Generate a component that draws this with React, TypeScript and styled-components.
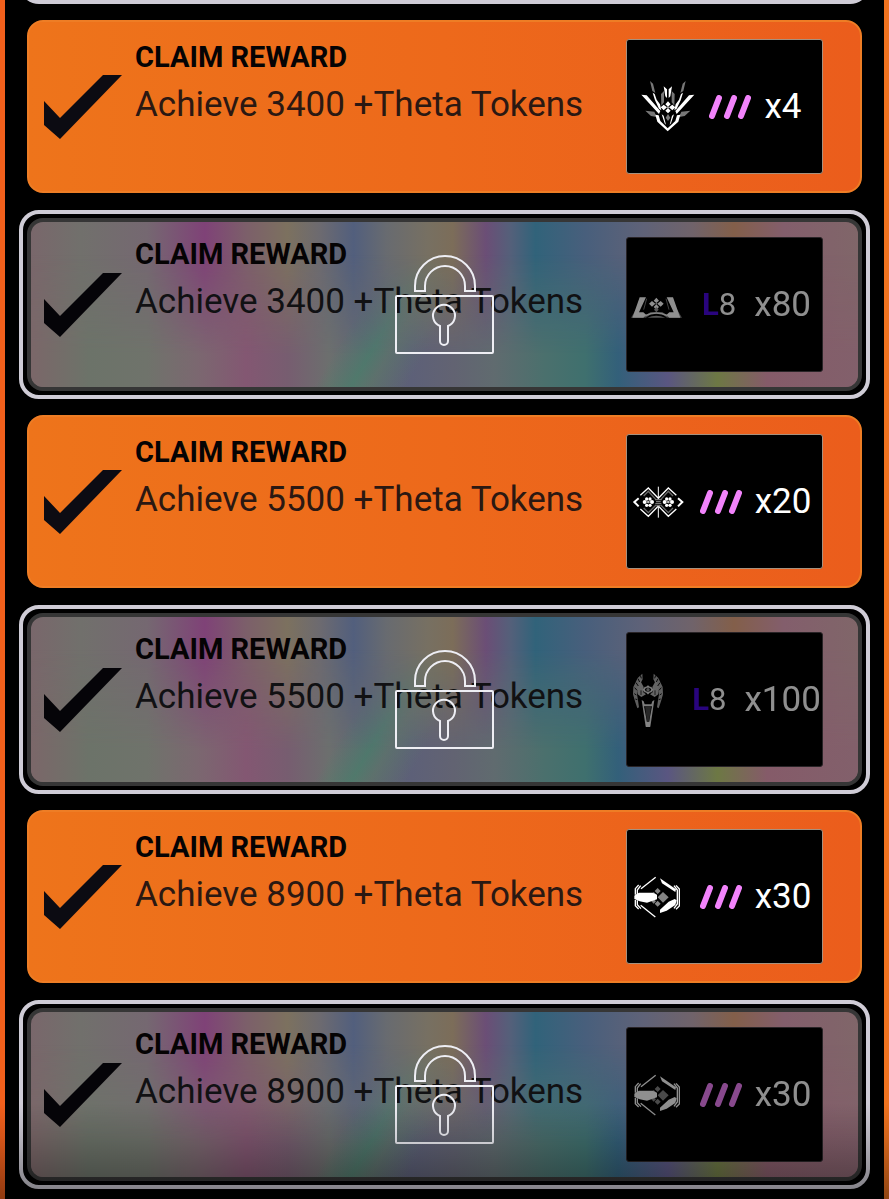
import React from "react";
import styled, { createGlobalStyle, css } from "styled-components";

const GlobalStyle = createGlobalStyle`
  * { box-sizing: border-box; }
  body {
    margin: 0;
    background: #000;
    font-family: Roboto, "Open Sans", sans-serif;
  }
`;

const Page = styled.main`
  position: relative;
  min-height: 100vh;
  overflow: hidden;
  padding: 0 5px;
  background: linear-gradient(90deg, #f2601c, #f0731f);
`;

const Panel = styled.div`
  min-height: 100vh;
  padding: 0 14px 10px;
  background: #000;
`;

const BottomShade = styled.div`
  position: absolute;
  inset: auto 0 0 0;
  height: 96px;
  background: linear-gradient(180deg, transparent, rgba(0, 0, 0, 0.12) 35%, rgba(0, 0, 0, 0.4));
  pointer-events: none;
`;

const RewardList = styled.ul`
  display: flex;
  flex-direction: column;
  gap: 16px;
  margin: 0;
  padding: 0;
  list-style: none;
`;

const frame = css`
  border: 4px solid #cfccd6;
  border-radius: 20px;
`;

const ScrolledItem = styled.li`
  display: flex;
  flex-direction: column;
  justify-content: flex-end;
  height: 4px;
  overflow: hidden;
`;

const ScrolledFrame = styled.div`
  ${frame}
  flex: none;
  height: 60px;
`;

const RewardItem = styled.li<{ $locked: boolean }>`
  ${(p) =>
    p.$locked
      ? css`
          ${frame}
          padding: 4px;
        `
      : css`
          padding: 0 8px 1px;
        `}
`;

const openCard = css`
  background: linear-gradient(90deg, #ee741b, #ed691b 50%, #eb5d1c);
  border: 2px solid #ee7d25;
  cursor: pointer;
`;

const lockedCard = css`
  border: 4px solid #363636;
  background: linear-gradient(
    90deg,
    #79676b 0%,
    #71706c 6%,
    #756871 14%,
    #7f4277 21%,
    #7c5f6a 26%,
    #7c715f 31%,
    #6c6a70 35%,
    #525f7d 39%,
    #686b70 43%,
    #777062 48%,
    #7c6d59 51%,
    #6b4e76 55%,
    #54607a 58%,
    #31637a 61%,
    #485f7c 67%,
    #5f6278 74%,
    #70636a 80%,
    #835f4a 85%,
    #835e6c 91%,
    #806669 100%
  );

  &::before {
    content: "";
    position: absolute;
    inset: 0;
    border-radius: 12px;
    background:
      linear-gradient(
        120deg,
        transparent 41%,
        rgba(70, 130, 105, 0.65) 45%,
        rgba(90, 128, 100, 0.45) 47%,
        transparent 51%
      ),
      linear-gradient(
        90deg,
        #7b6769 0%,
        #6c7369 7%,
        #6f736b 14%,
        #7b6870 20%,
        #835772 26%,
        #775d70 31%,
        #6c6f6e 36%,
        #606473 41%,
        #5d6078 46%,
        #626372 51%,
        #606b6f 56%,
        #4b706d 62%,
        #3f706e 67%,
        #33607a 71%,
        #5a5681 77%,
        #6d7844 83%,
        #855b69 89%,
        #82606b 100%
      );
    mask-image: linear-gradient(180deg, transparent 20%, #000 80%);
  }
`;

const RewardCard = styled.button<{ $locked: boolean }>`
  position: relative;
  display: flex;
  align-items: center;
  width: 100%;
  height: 173px;
  margin: 0;
  padding: 0;
  border-radius: 16px;
  color: #08070b;
  font: inherit;
  text-align: left;
  ${(p) => (p.$locked ? lockedCard : openCard)}
  padding-left: ${(p) => (p.$locked ? 13 : 15)}px;
  padding-right: ${(p) => (p.$locked ? 35 : 37)}px;
`;

const CheckMark = styled.svg`
  position: relative;
  flex: none;
  width: 78px;
  height: 64px;
`;

const Copy = styled.span<{ $locked: boolean }>`
  position: relative;
  display: flex;
  flex: 1;
  flex-direction: column;
  align-self: flex-start;
  min-width: 0;
  padding: ${(p) => (p.$locked ? 9 : 12)}px 0 0 13px;
`;

const Title = styled.span`
  font-size: 29px;
  font-weight: 700;
  line-height: 46px;
  color: #050304;
`;

const Goal = styled.span<{ $locked: boolean }>`
  font-size: 35px;
  line-height: 50px;
  white-space: nowrap;
  color: ${(p) => (p.$locked ? "#111113" : "#2b1812")};
`;

const RewardTile = styled.span<{ $locked: boolean }>`
  position: relative;
  display: flex;
  flex: none;
  align-items: center;
  justify-content: center;
  width: 197px;
  height: 135px;
  padding-right: 4px;
  border: 1px solid ${(p) => (p.$locked ? "#292427" : "#a7917e")};
  border-radius: 3px;
  background: #000;
  color: #fff;

  > * {
    flex: none;
    opacity: ${(p) => (p.$locked ? 0.56 : 1)};
  }
`;

const Emblem = styled.svg`
  width: 50px;
  height: 50px;
  overflow: visible;
`;

const Slashes = styled.svg`
  width: 42px;
  height: 24px;
  margin: 0 13px 0 16px;
`;

const Level = styled.span`
  margin: 0 18px 0 18px;
  font-size: 31px;
  line-height: 40px;

  b {
    color: #4a08e0;
  }
`;

const Amount = styled.span`
  font-size: 35px;
  line-height: 42px;
`;

const Padlock = styled.svg`
  position: absolute;
  top: 50%;
  left: 50%;
  width: 100px;
  height: 100px;
  transform: translate(-50%, -50%);
`;

type EmblemKind = "thorn" | "ramp" | "twin" | "wings" | "orbit";

/* Four-lobed core with a small pivot, shared by several emblems */
const Core = ({ x, y }: { x: number; y: number }) => (
  <g transform={`translate(${x} ${y})`} fill="#fff">
    <path d="M0-18 8-9 0-2-8-9ZM0 2 8 10 0 18-8 10Z" />
    <path d="M-13-8-3 0-13 9-22 0ZM13-8 22 0 13 9 3 0Z" />
    <circle r="3" fill="#aaa" />
  </g>
);

const emblems: Record<EmblemKind, { box: string; art: React.ReactNode }> = {
  thorn: {
    box: "129 245 150 150",
    art: (
      <>
        <g fill="#777">
          <path d="M150 242 159 250 166 278 157 272ZM257 242 248 250 241 278 250 272Z" />
          <path d="M136 331 163 334 170 350 153 347ZM271 331 244 334 237 350 254 347Z" />
          <path d="M183 281 192 272 192 306 184 316ZM224 281 215 272 215 306 223 316Z" />
        </g>
        <g fill="#fff">
          <path d="M124 283 140 285 181 332 177 341ZM283 283 267 285 226 332 230 341Z" />
          <path d="M158 277 164 281 170 298 180 312 184 330 177 325 165 300ZM249 277 243 281 237 298 227 312 223 330 230 325 242 300Z" />
          <path d="M191 258 201 267 201 293 196 288ZM216 258 206 267 206 293 211 288Z" />
          <path d="M166 343 176 345 181 362 203 384 226 362 231 345 241 343 235 364 203 393 172 364Z" />
          <path d="M185 342 191 346 198 373 194 369ZM222 342 216 346 209 373 213 369Z" />
        </g>
        <Core x={204} y={321} />
        <path d="M204 341 211 352 204 362 197 352Z" fill="#777" />
      </>
    ),
  },
  ramp: {
    box: "578 237 150 150",
    art: (
      <>
        <path d="M588 318 569 350H614L630 338H661L677 350H722L703 318 711 345H680L663 333H628L609 345H577Z" fill="#777" />
        <path d="M595 289H614L593 334H606L615 342 606 350H573L577 340Z" fill="#fff" />
        <path d="M695 289H676L697 334H684L675 342 684 350H717L713 340Z" fill="#fff" />
        <path d="M616 293 607 326M674 293 683 326" stroke="#777" strokeWidth="3" />
        <path d="M611 344Q645 328 679 344" stroke="#eee" strokeWidth="5" fill="none" />
        <path d="M618 350Q645 339 672 350Z" fill="#999" />
        <Core x={645} y={308} />
        <path d="M645 318 652 326 645 334 638 326Z" fill="#999" />
      </>
    ),
  },
  twin: {
    box: "24 140 150 150",
    art: (
      <>
        <g fill="none" strokeWidth="4">
          <path d="M53 197 67 183 90 208M104 208 127 183 141 197M53 233 67 247 90 224M104 224 127 247 141 233" stroke="#666" />
          <path d="M43 195 67 173 97 204 127 173 151 195M43 236 67 258 97 227 127 258 151 236" stroke="#fff" />
          <path d="M38 204 25 215 38 228M156 204 169 215 156 228" stroke="#fff" strokeWidth="6" />
          <path d="M97 169V202M97 228V262" stroke="#fff" strokeWidth="3" />
          <path d="M87 208H107M90 214H104M88 220H106M91 226H103" stroke="#777" />
        </g>
        <g fill="#fff">
          {[67, 127].map((x) => (
            <g key={x}>
              <circle cx={x - 11} cy="215" r="6" />
              <circle cx={x + 11} cy="215" r="6" />
              <circle cx={x - 5} cy="206" r="5" />
              <circle cx={x + 5} cy="206" r="5" />
              <circle cx={x - 5} cy="225" r="5" />
              <circle cx={x + 5} cy="225" r="5" />
              <circle cx={x} cy="215" r="4" fill="#bbb" />
            </g>
          ))}
        </g>
      </>
    ),
  },
  wings: {
    box: "0 132 150 150",
    art: (
      <>
        {["", "translate(144 0) scale(-1 1)"].map((t) => (
          <g key={t} transform={t}>
            <path d="M55 128 41 141 28 168 27 190 33 211 40 232 45 229 42 208 39 190 44 168 56 145Z" fill="#a8a8a8" />
            <path d="M48 148 59 168 58 184 66 190 52 198 41 190 40 168Z" fill="#b5b5b5" />
            <path d="M49 133 52 142M42 143 47 153M36 155 43 165M32 170 39 178M31 188 37 192M34 204 40 206" stroke="#111" strokeWidth="3" />
            <path d="M51 178V192" stroke="#333" strokeWidth="3" />
            <path d="M53 207 59 211 62 220H72V226H60L69 274V287H65Z" fill="#dedede" />
          </g>
        ))}
        <path d="M63 226H81L75 274H69Z" fill="#484848" />
        <path d="M66 273H78V288H66Z" fill="#eee" />
        <g fill="none" stroke="#ddd" strokeWidth="5">
          <path d="M65 168 59 176 65 184M79 168 85 176 79 184M67 170 72 166 77 170M67 182 72 187 77 182" />
        </g>
        <circle cx="72" cy="176" r="5" fill="#999" />
      </>
    ),
  },
  orbit: {
    box: "26 140 150 150",
    art: (
      <>
        <g fill="#858585">
          <path d="M97 188 106 197 97 206 88 197ZM113 200 130 216 113 232 97 216ZM97 226 106 235 97 244 88 235Z" />
          <path d="M85 200 92 207 85 214 78 207ZM85 221 92 228 85 235 78 228Z" />
        </g>
        <g fill="none" stroke="#fff" strokeWidth="4">
          <path d="M91 156 47 190M46 240 90 275" />
          <path d="M40 179 30 190V208M30 224V241L40 251M46 181 36 194V207M36 225V238L47 250" />
          <path d="M152 180 162 191V242L152 252M146 181 156 194V236L146 249" />
        </g>
        <path d="M104 159 152 192 150 200 110 174ZM104 263V253L130 229 148 221 154 225 150 239 124 256Z" fill="#fff" />
        <path d="M33 207 41 202H82L95 208V222L80 227 65 232 43 228 27 221V211Z" fill="#fff" />
      </>
    ),
  },
};

type Reward = {
  tokens: number;
  emblem: EmblemKind;
  currency: "slashes" | "level";
  amount: number;
  locked: boolean;
};

const rewards: Reward[] = [
  { tokens: 3400, emblem: "thorn", currency: "slashes", amount: 4, locked: false },
  { tokens: 3400, emblem: "ramp", currency: "level", amount: 80, locked: true },
  { tokens: 5500, emblem: "twin", currency: "slashes", amount: 20, locked: false },
  { tokens: 5500, emblem: "wings", currency: "level", amount: 100, locked: true },
  { tokens: 8900, emblem: "orbit", currency: "slashes", amount: 30, locked: false },
  { tokens: 8900, emblem: "orbit", currency: "slashes", amount: 30, locked: true },
];

const RewardRow = ({ tokens, emblem, currency, amount, locked }: Reward) => (
  <RewardItem $locked={locked}>
    <RewardCard type="button" $locked={locked} disabled={locked}>
      <CheckMark viewBox="0 0 78 64" aria-hidden="true">
        <path d="M0 26 16 43 59 0H78L16 64 0 50Z" fill={locked ? "#050408" : "#0c0b12"} />
      </CheckMark>
      <Copy $locked={locked}>
        <Title>CLAIM REWARD</Title>
        <Goal $locked={locked}>Achieve {tokens} +Theta Tokens</Goal>
      </Copy>
      <RewardTile $locked={locked}>
        <Emblem viewBox={emblems[emblem].box} aria-hidden="true">
          {emblems[emblem].art}
        </Emblem>
        {currency === "slashes" ? (
          <Slashes viewBox="0 0 42 24" aria-hidden="true">
            <path d="M3 21 10 3M18 21 25 3M32 21 39 3" stroke="#f283fb" strokeWidth="6" strokeLinecap="round" />
          </Slashes>
        ) : (
          <Level>
            <b>L</b>8
          </Level>
        )}
        <Amount>x{amount}</Amount>
      </RewardTile>
      {locked && (
        <Padlock viewBox="0 0 100 100" fill="none" stroke="#eeeef4" strokeWidth="2" aria-hidden="true">
          <path d="M20 36V31A30 30 0 0 1 80 31V36H70V31A20 20 0 0 0 30 31V36Z" />
          <rect x="1" y="41" width="97" height="57" rx="1" />
          <path d="M45 71A11 11 0 1 1 53 71V86A4 4 0 0 1 45 86Z" />
        </Padlock>
      )}
    </RewardCard>
  </RewardItem>
);

export default function App() {
  return (
    <>
      <GlobalStyle />
      <Page>
        <Panel>
          <RewardList>
            <ScrolledItem aria-hidden="true">
              <ScrolledFrame />
            </ScrolledItem>
            {rewards.map((reward) => (
              <RewardRow key={`${reward.tokens}-${reward.locked}`} {...reward} />
            ))}
          </RewardList>
        </Panel>
        <BottomShade />
      </Page>
    </>
  );
}
